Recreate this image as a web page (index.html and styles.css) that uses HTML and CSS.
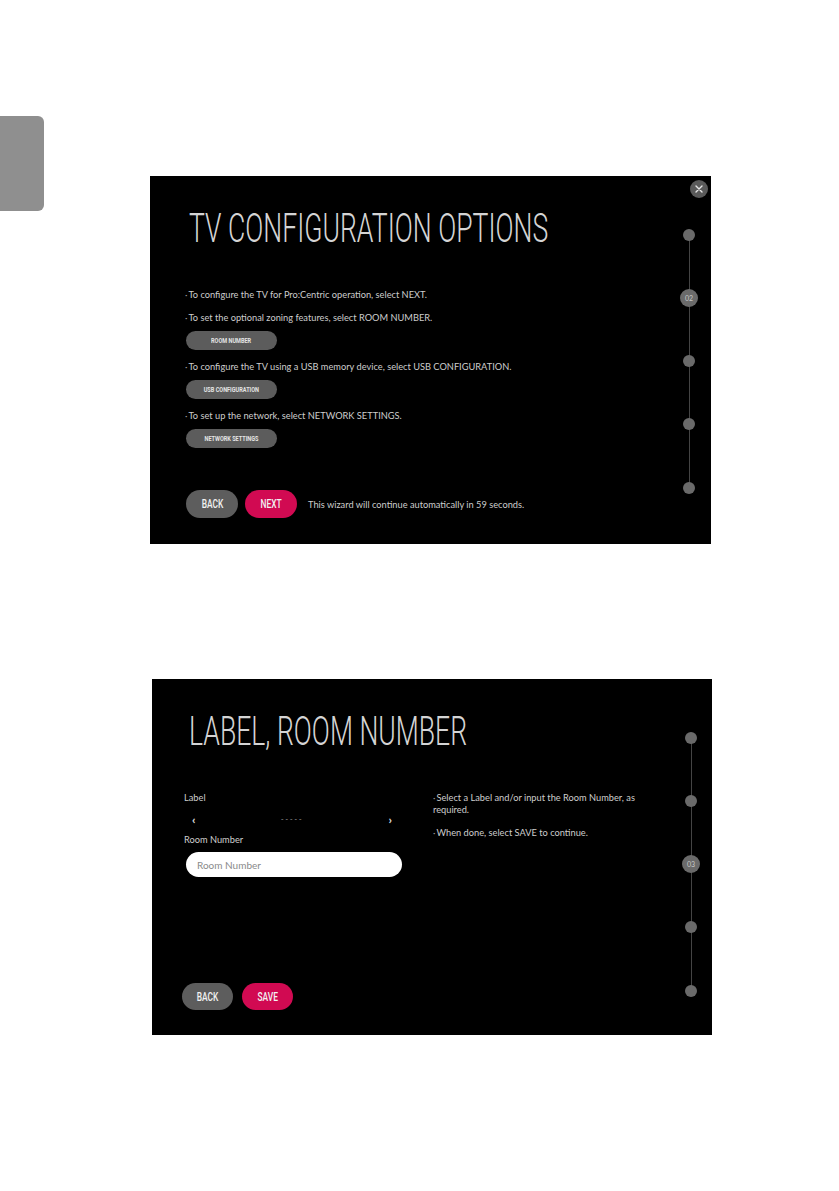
FILE: index.html
```html
<!DOCTYPE html>
<html>
<head>
<meta charset="utf-8">
<title>TV configuration</title>
<link rel="stylesheet" href="styles.css">
</head>
<body>
<div class="page">
  <aside class="edge">
    <div class="tab"></div>
  </aside>

  <main class="shots">

    <!-- screen 1 : configuration options -->
    <section class="tv tv-options">
      <button class="close" type="button" aria-label="close">
        <svg width="8" height="8" viewBox="0 0 8 8"><path d="M1 1 L7 7 M7 1 L1 7" stroke="#e6e6e6" stroke-width="1.4" stroke-linecap="round"/></svg>
      </button>
      <div class="body">
        <h1 class="title"><span>TV CONFIGURATION OPTIONS</span></h1>
        <div class="opts">
          <p class="note">To configure the TV for Pro:Centric operation, select NEXT.</p>
          <p class="note">To set the optional zoning features, select ROOM NUMBER.</p>
          <button class="pill" type="button"><span>ROOM NUMBER</span></button>
          <p class="note">To configure the TV using a USB memory device, select USB CONFIGURATION.</p>
          <button class="pill" type="button"><span>USB CONFIGURATION</span></button>
          <p class="note">To set up the network, select NETWORK SETTINGS.</p>
          <button class="pill" type="button"><span>NETWORK SETTINGS</span></button>
        </div>
        <div class="actions">
          <button class="btn back" type="button"><span>BACK</span></button>
          <button class="btn go" type="button"><span>NEXT</span></button>
          <span class="timer">This wizard will continue automatically in 59 seconds.</span>
        </div>
      </div>
      <ol class="steps">
        <li><span class="dot"></span></li>
        <li><span class="dot cur">02</span></li>
        <li><span class="dot"></span></li>
        <li><span class="dot"></span></li>
        <li><span class="dot"></span></li>
      </ol>
    </section>

    <!-- screen 2 : label / room number -->
    <section class="tv tv-room">
      <div class="body">
        <h1 class="title"><span>LABEL, ROOM NUMBER</span></h1>
        <div class="form">
          <div class="fields">
            <div class="field-label">Label</div>
            <div class="picker">
              <span class="chev">&lsaquo;</span>
              <span class="dashes">-----</span>
              <span class="chev">&rsaquo;</span>
            </div>
            <div class="field-label">Room Number</div>
            <input class="room" type="text" placeholder="Room Number">
          </div>
          <div class="help">
            <p class="note">Select a Label and/or input the Room Number, as required.</p>
            <p class="note">When done, select SAVE to continue.</p>
          </div>
        </div>
        <div class="actions">
          <button class="btn back" type="button"><span>BACK</span></button>
          <button class="btn go" type="button"><span>SAVE</span></button>
        </div>
      </div>
      <ol class="steps">
        <li><span class="dot"></span></li>
        <li><span class="dot"></span></li>
        <li><span class="dot cur">03</span></li>
        <li><span class="dot"></span></li>
        <li><span class="dot"></span></li>
      </ol>
    </section>

  </main>
</div>
</body>
</html>
```

FILE: styles.css
```css
body{
  margin: 0;
  background: #fff;
  font-family: Lato, "Open Sans", sans-serif;
}
.page{
  display: grid;
  grid-template-columns: 44px 1fr;
  width: 839px;
  min-height: 1191px;
}
.tab{
  margin-top: 116px;
  height: 95px;
  background: #8f8f8f;
  border-radius: 0 6px 6px 0;
}

.shots{
  padding: 176px 0 0 106px;
}
.tv{
  position: relative;
  display: flex;
  background: #000;
  color: #cdcdcd;
}
.tv-options{
  width: 561px;
  height: 368px;
}
.tv-room{
  width: 560px;
  height: 356px;
  margin: 135px 0 0 2px;
}

.body{
  flex: 1;
  min-width: 0;
  display: flex;
  flex-direction: column;
  padding: 33px 0 26px 35px;
}
.tv-room .body{
  padding: 33px 0 25px 30px;
}

.title{
  margin: 0 0 0 4px;
  height: 40px;
  font-family: Roboto, sans-serif;
  font-weight: 300;
  font-size: 40px;
  line-height: 40px;
  color: #d4d4d4;
  white-space: nowrap;
}
.tv-room .title{
  margin-left: 7px;
}
.title span{
  display: inline-block;
  transform: scaleX(.665);
  transform-origin: left center;
}

.note{
  margin: 11px 0 0;
  font-size: 9.25px;
  line-height: 12px;
  color: #cdcdcd;
}
.note::before{
  content: "\00b7";
  display: inline-block;
  width: 3.5px;
  color: #999;
}
.opts{
  margin-top: 40px;
}
.opts .note:first-child{
  margin-top: 0;
}

.pill{
  display: block;
  width: 91px;
  height: 19px;
  margin: 7px 0 0 1px;
  padding: 0;
  border: 0;
  border-radius: 10px;
  background: #5c5c5c;
  color: #e4e4e4;
  font-family: Roboto, sans-serif;
  font-weight: 700;
  font-size: 7.5px;
}
.pill span{
  display: inline-block;
  transform: scaleX(.74);
}
.btn span{
  display: inline-block;
  transform: scaleX(.7);
}

.actions{
  display: flex;
  align-items: center;
  gap: 7px;
  margin-top: auto;
  padding-left: 1px;
}
.tv-room .actions{
  gap: 9px;
  padding-left: 0;
}
.btn{
  width: 52px;
  height: 28px;
  padding: 0;
  border: 0;
  border-radius: 14px;
  color: #f2f2f2;
  font-family: Roboto, sans-serif;
  font-weight: 500;
  font-size: 12px;
}
.tv-room .btn{
  width: 51px;
  height: 27px;
}
.back{
  background: #5d5d5d;
}
.go{
  background: #d10a52;
}
.timer{
  margin-left: 4px;
  font-size: 9.25px;
  color: #cdcdcd;
}

.form{
  display: flex;
  gap: 31px;
  margin: 40px 0 0 2px;
}
.fields{
  width: 218px;
}
.field-label{
  font-size: 9.25px;
  line-height: 12px;
  color: #cdcdcd;
}
.picker{
  display: flex;
  justify-content: space-between;
  align-items: center;
  height: 12px;
  margin: 9px 0 9px;
  padding: 0 10px 0 8px;
}
.chev{
  font-weight: 700;
  font-size: 12px;
  color: #e0e0e0;
}
.dashes{
  font-size: 8px;
  letter-spacing: 1.5px;
  color: #9a9a9a;
}
.room{
  display: block;
  box-sizing: border-box;
  width: 216px;
  height: 25px;
  margin: 6px 0 0 2px;
  padding: 0 11px;
  border: 0;
  border-radius: 13px;
  background: #fff;
  font-family: Lato, sans-serif;
  font-size: 10px;
  outline: none;
}
.room::placeholder{
  color: #8a8a8a;
}
.help{
  width: 215px;
}
.help .note:first-child{
  margin-top: 0;
}

.close{
  position: absolute;
  top: 4px;
  right: 3px;
  display: flex;
  align-items: center;
  justify-content: center;
  width: 18px;
  height: 18px;
  padding: 0;
  border: 0;
  border-radius: 50%;
  background: #5a5a5a;
}

.steps{
  position: relative;
  display: grid;
  grid-template-rows: repeat(5, 63.25px);
  justify-items: center;
  align-items: center;
  width: 18px;
  margin: 27px 13px 0 0;
  padding: 0;
  list-style: none;
  align-self: flex-start;
}
.tv-room .steps{
  margin-right: 12px;
}
.steps::before{
  content: "";
  position: absolute;
  top: 32px;
  bottom: 32px;
  left: 8.5px;
  width: 1px;
  background: #444;
}
.steps li{
  position: relative;
}
.dot{
  display: block;
  width: 12px;
  height: 12px;
  border-radius: 50%;
  background: #6a6a6a;
}
.dot.cur{
  width: 18px;
  height: 18px;
  font-family: Lato, sans-serif;
  font-size: 7px;
  line-height: 18px;
  text-align: center;
  color: #c8c8c8;
}
```
